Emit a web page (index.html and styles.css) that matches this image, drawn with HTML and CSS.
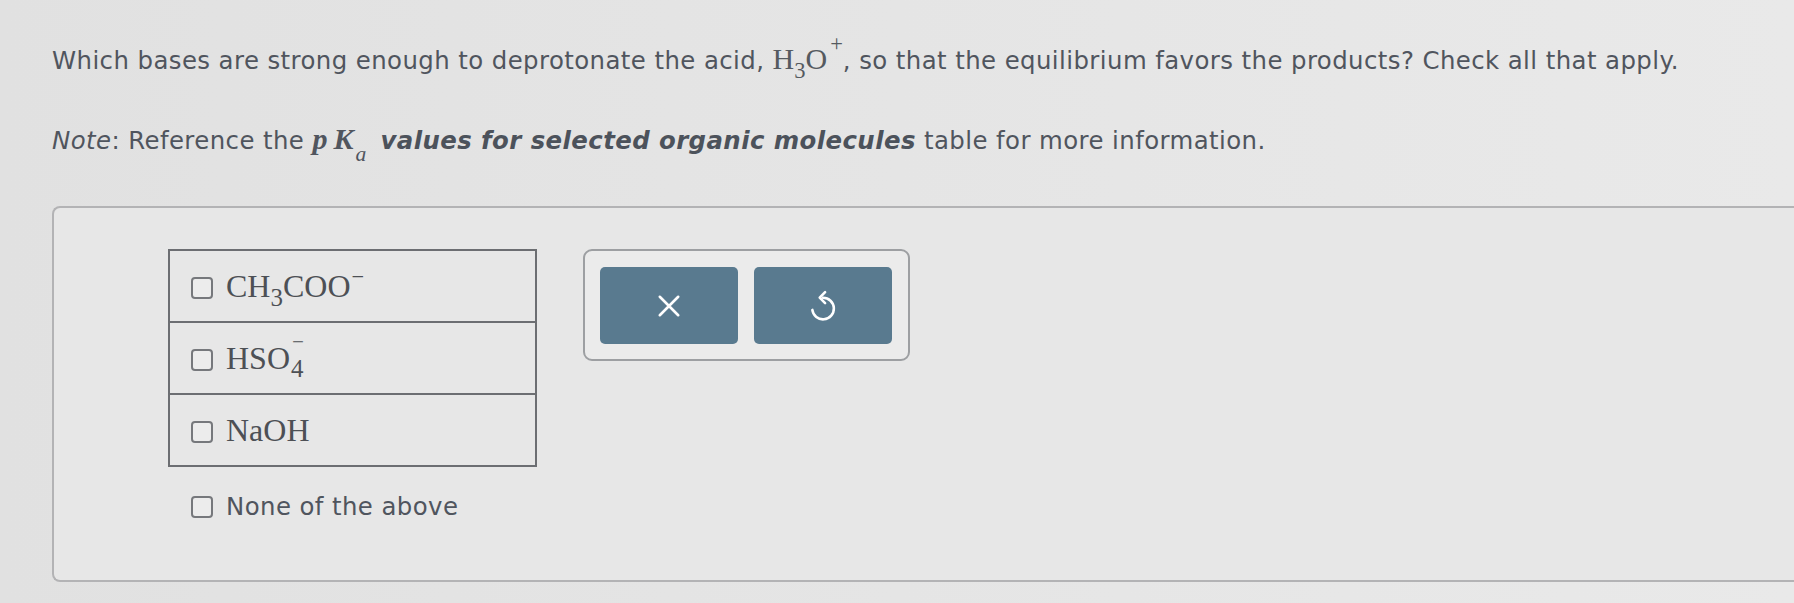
FILE: index.html
```html
<!DOCTYPE html>
<html>
<head>
<meta charset="utf-8">
<link rel="stylesheet" href="styles.css">
</head>
<body>
<div class="page">
  <p class="question">Which bases are strong enough to deprotonate the acid, <span class="chem">H<span class="sub">3</span>O<span class="sup">+</span></span>, so that the equilibrium favors the products? Check all that apply.</p>
  <p class="note"><i>Note</i>: Reference the <span class="pka"><i>p</i>&thinsp;<i>K</i><span class="sub"><i>a</i></span></span> <b><i>values for selected organic molecules</i></b> table for more information.</p>
  <div class="panel">
    <div class="choices">
      <div class="opts">
        <label class="opt"><span class="box"></span><span class="chem big">CH<span class="sub">3</span>COO<span class="sup">&minus;</span></span></label>
        <label class="opt"><span class="box"></span><span class="chem big">HSO<span class="stack"><span class="s-up">&minus;</span>4</span></span></label>
        <label class="opt"><span class="box"></span><span class="chem big">NaOH</span></label>
      </div>
      <label class="none"><span class="box"></span><span>None of the above</span></label>
    </div>
    <div class="tools">
      <button class="tool" aria-label="clear">
        <svg width="26" height="26" viewBox="0 0 24 24" fill="none" stroke="#ffffff" stroke-width="2.4" stroke-linecap="round"><path d="M3.5 3.5 L20.5 20.5 M20.5 3.5 L3.5 20.5"/></svg>
      </button>
      <button class="tool" aria-label="undo">
        <svg width="36" height="36" viewBox="0 0 24 24" fill="none" stroke="#ffffff" stroke-width="1.7" stroke-linecap="round" stroke-linejoin="round"><path d="M12 6.5 A7.2 7.2 0 1 1 4.9 14.6"/><path d="M13.4 2.7 L9.8 6.4 L13.4 10.1"/></svg>
      </button>
    </div>
  </div>
</div>
</body>
</html>
```
FILE: styles.css
```css
html, body {
  margin: 0;
  padding: 0;
}
body {
  background: linear-gradient(90deg, #e1e1e1 0%, #e5e5e5 50%, #e9e9e9 100%);
  font-family: "DejaVu Sans", Verdana, sans-serif;
  color: #50555e;
  overflow: hidden;
  width: 1794px;
  height: 603px;
}
.page {
  padding: 44px 0 0 52px;
}
.question, .note {
  margin: 0;
  font-size: 24.4px;
  letter-spacing: 0.42px;
  line-height: 30px;
  white-space: nowrap;
}
.note {
  margin-top: 48px;
}
.chem {
  font-family: "Liberation Serif", "Times New Roman", serif;
  font-size: 30px;
  letter-spacing: 0;
  color: #555a60;
}
.sub, .sup {
  position: relative;
  font-size: 0.75em;
  line-height: 0;
}
.sub { top: 0.4em; }
.sup { top: -0.8em; margin-left: 3px; }
.pka {
  font-family: "Liberation Serif", "Times New Roman", serif;
  font-weight: bold;
  font-size: 30px;
  letter-spacing: 0;
  color: #50555e;
}
.pka .sub { font-weight: normal; font-size: 0.72em; top: 0.55em; margin-left: 2px; margin-right: 6px; }
.note b { color: #4c525b; }
.panel {
  margin-top: 50px;
  width: 1800px;
  height: 376px;
  box-sizing: border-box;
  border: 2px solid #b3b3b5;
  border-right: none;
  border-radius: 8px 0 0 8px;
  background: #e7e7e7;
  padding: 41px 0 0 114px;
  display: flex;
  align-items: flex-start;
  gap: 46px;
}
.opts {
  width: 369px;
  box-sizing: border-box;
  border: 2px solid #6c6e72;
}
.opt {
  height: 70px;
  display: flex;
  align-items: center;
  padding-left: 21px;
  gap: 13px;
  border-top: 2px solid #6c6e72;
}
.opt:first-child { border-top: none; height: 70px; }
.box {
  width: 22px;
  height: 22px;
  box-sizing: border-box;
  border: 2px solid #76787c;
  border-radius: 4px;
  background: #ececec;
  flex: none;
}
.opt .box { margin-top: 4px; }
.chem.big {
  font-size: 32px;
  color: #4d5055;
}
.big .sub { top: 0.38em; font-size: 0.78em; }
.big .sup { top: -0.55em; font-size: 0.7em; margin-left: 1px; }
.stack {
  position: relative;
  top: 0.36em;
  font-size: 0.78em;
  line-height: 0;
  margin-left: 1px;
}
.s-up {
  position: absolute;
  left: 1px;
  top: -0.62em;
  font-size: 0.85em;
}
.none {
  display: flex;
  align-items: center;
  gap: 13px;
  margin: 25px 0 0 23px;
  font-size: 24.4px;
  letter-spacing: 0.42px;
  color: #50555e;
}
.tools {
  width: 327px;
  height: 112px;
  box-sizing: border-box;
  border: 2px solid #9d9fa2;
  border-radius: 9px;
  background: #ebebeb;
  padding: 16px 15px;
  display: flex;
  gap: 16px;
}
.tool {
  width: 138px;
  height: 77px;
  border: none;
  border-radius: 5px;
  background: #597a8f;
  display: flex;
  align-items: center;
  justify-content: center;
  padding: 0;
}
```
